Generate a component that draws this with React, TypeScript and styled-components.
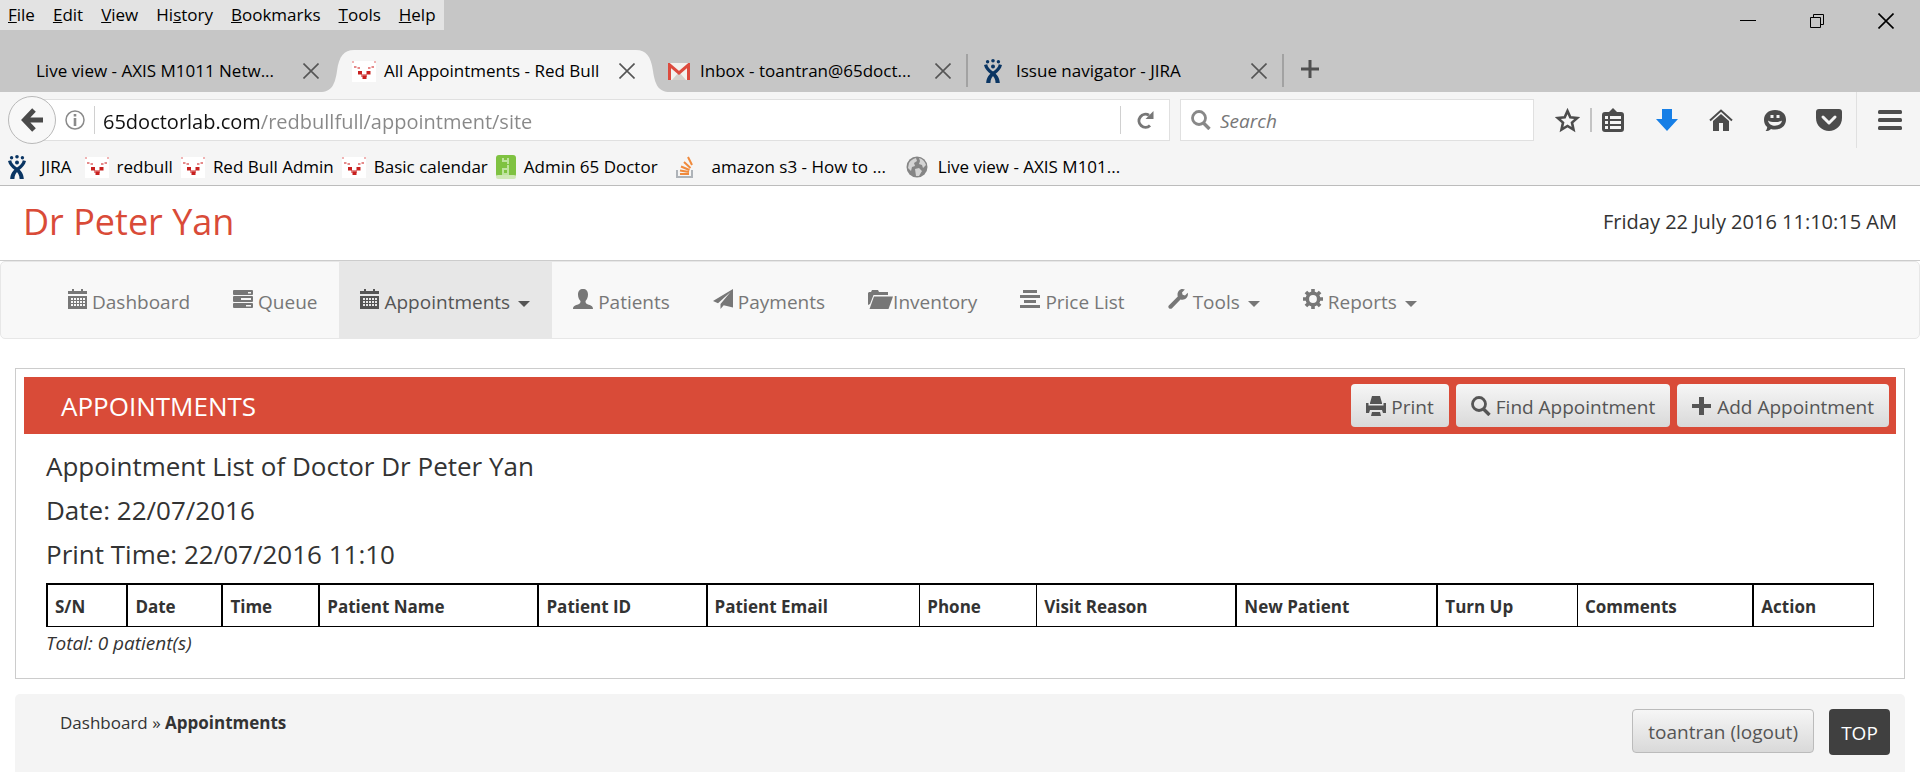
import React from "react";
import styled, { createGlobalStyle, css } from "styled-components";

const GlobalStyle = createGlobalStyle`
  *, *::before, *::after { box-sizing: border-box; }
  html, body, #root { height: 100%; }
  body { margin: 0; background: #fff; color: #333; font: 17px/24px "Open Sans", "Noto Sans", sans-serif; }
  button, input { font: inherit; color: inherit; margin: 0; padding: 0; border: 0; background: none; outline: 0; }
  button { cursor: pointer; white-space: nowrap; }
  a { color: inherit; text-decoration: none; }
  svg { display: block; flex: none; }
  h1, h2, h3, p { margin: 0; font-weight: 400; }
`;

const Page = styled.div`
  min-height: 100%;
  display: flex;
  flex-direction: column;
`;

/* ---------- browser window ---------- */

const TitleBar = styled.div`
  height: 50px;
  display: flex;
  justify-content: space-between;
  align-items: flex-start;
  background: #c6c6c6;
  color: #000;
`;

const MenuBar = styled.div`
  height: 30px;
  display: flex;
  align-items: center;
  gap: 18px;
  padding: 0 8px;
  background: #e3e3e3;
`;

const MenuItem = styled.button`
  font-size: 17px;
  line-height: 24px;
`;

const WindowControls = styled.div`
  height: 42px;
  display: flex;
  align-items: center;
  gap: 53px;
  padding-right: 26px;
`;

const TabStrip = styled.div`
  height: 42px;
  display: flex;
  padding-left: 21px;
  background: #c6c6c6;
  color: #000;
`;

const TabItem = styled.div<{ $active?: boolean; $divider?: boolean }>`
  position: relative;
  z-index: ${(p) => (p.$active ? 1 : 0)};
  width: 316px;
  display: flex;
  align-items: center;
  gap: 8px;
  padding: 0 18px 0 15px;
  background: ${(p) => (p.$active ? "#f5f5f5" : "transparent")};
  ${(p) =>
    p.$divider &&
    css`
      &::after {
        content: "";
        position: absolute;
        right: 1px;
        top: 4px;
        width: 2px;
        height: 33px;
        background: #a2a2a2;
      }
    `}
`;

const TabCurve = styled.svg<{ $side: "left" | "right" }>`
  position: absolute;
  top: 0;
  ${(p) => p.$side}: -17px;
`;

const TabTitle = styled.span`
  position: relative;
  flex: 1;
  white-space: nowrap;
  font-size: 17px;
`;

const Favicon = styled.span`
  position: relative;
  width: 24px;
  display: flex;
`;

const TabClose = styled.button`
  position: relative;
`;

const NewTab = styled.button`
  padding: 0 16px 4px;
`;

const NavBar = styled.div`
  height: 56px;
  display: flex;
  align-items: center;
  padding-left: 8px;
  background: #f5f5f5;
  color: #4c4c4c;
`;

const BackButton = styled.button`
  position: relative;
  z-index: 1;
  width: 48px;
  height: 48px;
  margin-right: -16px;
  display: grid;
  place-items: center;
  border: 1px solid #b9b9b9;
  border-radius: 50%;
  background: #f8f8f8;
`;

const Field = styled.div<{ $width?: number }>`
  height: 42px;
  display: flex;
  align-items: center;
  border: 1px solid #e0e0e0;
  background: #fff;
  ${(p) => (p.$width ? `width: ${p.$width}px;` : "flex: 1;")}
`;

const AddressField = styled(Field)`
  padding-left: 24px;
`;

const SearchField = styled(Field)`
  margin-left: 10px;
  padding-left: 10px;
  gap: 9px;
  color: #888;
`;

const FieldDivider = styled.span`
  width: 1px;
  height: 28px;
  margin: 0 8px 0 9px;
  background: #d0d0d0;
`;

const AddressInput = styled.input`
  flex: 1;
  min-width: 0;
  height: 30px;
  padding-top: 2px;
  font-size: 20px;
  line-height: 28px;
  color: transparent;
  caret-color: #111;
  background: linear-gradient(to right, #111 156px, #888 156px);
  background-clip: text;
`;

const ReloadButton = styled.button`
  width: 49px;
  height: 28px;
  display: grid;
  place-items: center;
  border-left: 1px solid #d0d0d0;
  color: #777;
`;

const SearchInput = styled.input`
  flex: 1;
  min-width: 0;
  height: 30px;
  padding-top: 2px;
  font-size: 19px;
  line-height: 28px;
  &::placeholder { color: #777; font-style: italic; opacity: 1; }
`;

const ToolButtons = styled.div`
  align-self: stretch;
  width: 386px;
  display: flex;
  align-items: center;
  padding-left: 10px;
`;

const ToolButton = styled.button<{ $width?: number }>`
  flex: none;
  width: ${(p) => p.$width ?? 54}px;
  height: 26px;
  display: grid;
  place-items: center;
`;

const ToolGroup = styled.div`
  display: flex;
  margin-left: 6px;
`;

const MenuButton = styled.button`
  flex: 1;
  height: 56px;
  display: grid;
  place-items: center;
  padding-left: 2px;
  border-left: 1px solid #e0e0e0;
`;

const ToolDivider = styled.span`
  width: 2px;
  height: 24px;
  background: #c4c4c4;
`;

const BookmarksBar = styled.div`
  height: 38px;
  display: flex;
  align-items: center;
  padding: 1px 8px 0;
  background: #f5f5f5;
  border-bottom: 1px solid #bcbcbc;
  color: #000;
`;

const Bookmark = styled.a<{ $gap: number; $after: number }>`
  display: flex;
  align-items: center;
  gap: ${(p) => p.$gap}px;
  margin-right: ${(p) => p.$after}px;
  white-space: nowrap;
  font-size: 17px;
`;

/* ---------- clinic site ---------- */

const SiteHeader = styled.header`
  height: 75px;
  display: flex;
  justify-content: space-between;
  padding: 0 23px;
  border-bottom: 1px solid #ccc;
`;

const DoctorName = styled.h1`
  font-size: 36px;
  line-height: 72px;
  color: #d94b38;
`;

const Clock = styled.time`
  font-size: 20px;
  line-height: 72px;
`;

const SiteNav = styled.nav`
  height: 78px;
  display: flex;
  padding-left: 46px;
  border: 1px solid #e7e7e7;
  border-radius: 5px;
  background: #f8f8f8;
`;

const NavLink = styled.a<{ $active?: boolean; $tight?: boolean }>`
  display: flex;
  align-items: center;
  gap: ${(p) => (p.$tight ? 0 : 5)}px;
  padding: 3px 22px 0 21px;
  white-space: nowrap;
  font-size: 19px;
  line-height: 28px;
  color: ${(p) => (p.$active ? "#555" : "#777")};
  background: ${(p) => (p.$active ? "#e7e7e7" : "transparent")};
  & > svg { margin-bottom: 5px; }
`;

const Caret = styled.span`
  margin: 4px 0 0 3px;
  border: 6px solid transparent;
  border-top-color: currentColor;
  border-bottom: 0;
`;

const Panel = styled.main`
  margin: 29px 15px 0;
  padding: 8px;
  min-height: 311px;
  border: 1px solid #ccc;
`;

const PanelBar = styled.div`
  height: 57px;
  display: flex;
  align-items: center;
  gap: 7px;
  padding: 0 7px 0 37px;
  background: #d94b38;
`;

const PanelTitle = styled.h2`
  flex: 1;
  padding-top: 1px;
  font-size: 26px;
  line-height: 36px;
  color: #fff;
`;

const ActionButton = styled.button<{ $outlined?: boolean }>`
  height: ${(p) => (p.$outlined ? 44 : 43)}px;
  display: flex;
  align-items: center;
  gap: 5px;
  padding: 2px 15px 0;
  border: ${(p) => (p.$outlined ? "1px solid #bbb" : "0")};
  border-radius: 4px;
  background: linear-gradient(#f6f6f6, #d9d9d9);
  font-size: 19px;
  line-height: 28px;
  color: #555;
  & > svg { margin-bottom: 2px; }
`;

const Report = styled.section`
  padding: 14px 22px 0;
`;

const ReportLine = styled.h3<{ $last?: boolean }>`
  font-size: 26px;
  line-height: 36px;
  margin-bottom: ${(p) => (p.$last ? 0 : 8)}px;
`;

const AppointmentTable = styled.table`
  width: 100%;
  table-layout: fixed;
  border-spacing: 0;
  margin-top: 11px;
  border: solid #000;
  border-width: 2px 1px 1px 0;
`;

const HeadCell = styled.th<{ $share: number; $thin?: boolean }>`
  width: ${(p) => p.$share}%;
  height: 41px;
  padding: 3px 6px 0 7px;
  border-left: ${(p) => (p.$thin ? 1 : 2)}px solid #000;
  text-align: left;
  white-space: nowrap;
  font-size: 17px;
  line-height: 24px;
`;

const Total = styled.p`
  font-size: 19px;
  line-height: 32px;
  font-style: italic;
`;

const Footer = styled.footer`
  flex: 1;
  min-height: 78px;
  margin: 15px 15px 0;
  padding: 15px 15px 0 45px;
  display: flex;
  align-items: flex-start;
  border-radius: 5px 5px 0 0;
  background: #f4f4f4;
`;

const Breadcrumb = styled.nav`
  flex: 1;
  font-size: 17px;
  line-height: 28px;
`;

const TopButton = styled.a`
  width: 61px;
  height: 46px;
  margin-left: 15px;
  border-radius: 4px;
  background: #404040;
  color: #fff;
  font-size: 19px;
  line-height: 48px;
  text-align: center;
`;

/* ---------- icons ---------- */

const CloseIcon = ({ color = "#555", size = 16 }: { color?: string; size?: number }) => (
  <svg width={size} height={size} viewBox="0 0 16 16" stroke={color} strokeWidth="1.6">
    <path d="M.5.5l15 15M15.5.5l-15 15" />
  </svg>
);

const BullIcon = () => (
  <svg width="24" height="22" viewBox="0 0 24 22">
    <path fill="#fff" d="M0 1h24v21H0z" />
    <path fill="#f0b4b4" d="M0 1h2v2H0zM22 1h2v2h-2z" />
    <path fill="#e58a8a" d="M2 6h2.500v2H2zM5.500 7H8v2H5.500zM16 7h2.500v2H16zM19.500 6H22v2h-2.500zM9 14h6v3H9z" />
    <path fill="#c8201f" d="M6 11h4v3.500H6zM14.500 11h4v3.500h-4zM10.500 15.500h4V19h-4z" />
  </svg>
);

const JiraIcon = () => (
  <svg width="18" height="24" viewBox="0 0 18 24" fill="#0a3563">
    <circle cx="3.600" cy="2.800" r="1.700" />
    <circle cx="9" cy="1.800" r="1.800" />
    <circle cx="14.400" cy="2.800" r="1.700" />
    <circle cx="9" cy="7.600" r="2" />
    <path d="M0 6l3.200-.8c.6 3.300 2.800 5 5.800 7.300 4 3 6.500 6 6.800 11.500h-4.200C11.500 20 10 17.800 7 15.300 3.500 12.500.8 10 0 6z" />
    <path d="M18 6l-3.200-.8c-.6 3.300-2.800 5-5.800 7.300-4 3-6.500 6-6.800 11.500h4.200c.1-4 1.600-6.200 4.600-8.700C14.500 12.500 17.200 10 18 6z" />
  </svg>
);

const GmailIcon = () => (
  <svg width="22" height="17" viewBox="0 0 22 17">
    <path fill="#f3f1ee" d="M2 0h18v17H2z" />
    <path fill="#d5d0cb" d="M4 17l7-8 7 8z" />
    <path fill="none" stroke="#dd4b3e" strokeWidth="3" d="M1.500 17V1.800L11 10l9.500-8.200V17" />
  </svg>
);

const GreenIcon = () => (
  <svg width="20" height="24" viewBox="0 0 20 24">
    <rect width="20" height="22" rx="3" fill="#7fc241" />
    <rect y="20" width="20" height="4" rx="2" fill="#cfe8b5" />
    <path fill="none" stroke="#bfe39f" strokeWidth="2" d="M7 3v3h5V3M12 6v3M12 10v9H7v-5h5" />
  </svg>
);

const StackIcon = () => (
  <svg width="18" height="22" viewBox="0 0 18 22" fill="none">
    <path stroke="#aeb3b8" strokeWidth="2" d="M1 14v7h15v-7" />
    <path stroke="#f08a3c" strokeWidth="2" d="M4 18h9M4 14.500l9 1.500M5 10.500l8.500 3.500M8 6l6.500 6M12 1l4 8" />
  </svg>
);

const GlobeIcon = () => (
  <svg width="22" height="22" viewBox="0 0 22 22">
    <circle cx="11" cy="11" r="10.500" fill="#858585" />
    <path fill="#d4d4d4" d="M3 7c2-3 4-4 7-5l1 3-3 2 1 3-3 1-1 4-3-3zM13 2c4 1 6 4 7 7l-3 3-1-3-3-1 1-3zM9 13l4-1 3 3-3 5h-3z" />
  </svg>
);

const BackIcon = () => (
  <svg width="22" height="24" viewBox="0 0 22 24" fill="none" stroke="#4a4a4a" strokeWidth="5">
    <path d="M13 2L3.500 12 13 22M4 12h18" />
  </svg>
);

const InfoIcon = () => (
  <svg width="20" height="20" viewBox="0 0 20 20">
    <circle cx="10" cy="10" r="9" fill="none" stroke="#8a8a8a" strokeWidth="1.500" />
    <path fill="#8a8a8a" d="M8.700 4h2.600v2.500H8.700zM8.700 8h2.600v8H8.700z" />
  </svg>
);

const ReloadIcon = () => (
  <svg width="17" height="18" viewBox="0 0 17 18">
    <path fill="none" stroke="currentColor" strokeWidth="3" d="M13 14.500A6.500 6.500 0 1 1 12 4.300" />
    <path fill="currentColor" d="M16.500 0v8h-8z" />
  </svg>
);

const MagnifierIcon = () => (
  <svg width="20" height="20" viewBox="0 0 20 20" fill="none" stroke="currentColor">
    <circle cx="8" cy="8" r="6.500" strokeWidth="2.800" />
    <path strokeWidth="3.400" d="M12.500 13l6 6" />
  </svg>
);

const StarIcon = () => (
  <svg width="25" height="25" viewBox="0 0 25 25" fill="none" stroke="#4c4c4c" strokeWidth="2.600">
    <path d="M12.500 3l2.800 6.300 6.900.7-5.200 4.600 1.500 7-6-3.600-6 3.600 1.500-7L2.800 10l6.900-.7z" />
  </svg>
);

const ClipboardIcon = () => (
  <svg width="22" height="24" viewBox="0 0 22 24">
    <path fill="#4c4c4c" d="M3 4h4l4-4 4 4h4a3 3 0 0 1 3 3v14a3 3 0 0 1-3 3H3a3 3 0 0 1-3-3V7a3 3 0 0 1 3-3z" />
    <path fill="#f5f5f5" d="M3 8h3v3H3zM8 8h11v3H8zM3 13h3v3H3zM8 13h11v3H8zM3 18h3v3H3zM8 18h11v3H8z" />
  </svg>
);

const DownloadIcon = () => (
  <svg width="22" height="22" viewBox="0 0 22 22" fill="#177fe6">
    <path d="M6 0h10v10h6L11 22 0 10h6z" />
  </svg>
);

const HomeIcon = () => (
  <svg width="24" height="22" viewBox="0 0 24 22">
    <path fill="none" stroke="#4c4c4c" strokeWidth="2" d="M1 11.500L12 1.500l11 10" />
    <path fill="#4c4c4c" d="M4 12l8-7 8 7v10h-6v-8h-4v8H4z" />
  </svg>
);

const SmileIcon = () => (
  <svg width="22" height="21" viewBox="0 0 22 21">
    <path fill="#4c4c4c" d="M11 0c6.500 0 11 4 11 9.700S17.500 19.500 11 19.500c-1.500 0-2.800-.2-4-.6C5.500 20.500 3.500 21 1.500 21c1-1 1.700-2.500 1.700-4C1.200 15.300 0 12.800 0 9.700 0 4 4.500 0 11 0z" />
    <path fill="#f5f5f5" d="M6.500 5h3v3h-3zM12.500 5h3v3h-3zM4 10.500c2.500 2 11.500 2 14 0-1 7-13 7-14 0z" />
  </svg>
);

const PocketIcon = () => (
  <svg width="26" height="22" viewBox="0 0 26 22">
    <path fill="#4c4c4c" d="M3 0h20a3 3 0 0 1 3 3v6c0 7.500-6 13-13 13S0 16.500 0 9V3a3 3 0 0 1 3-3z" />
    <path fill="none" stroke="#f5f5f5" strokeWidth="3" strokeLinecap="round" strokeLinejoin="round" d="M7 8l6 6 6-6" />
  </svg>
);

const BurgerIcon = () => (
  <svg width="24" height="20" viewBox="0 0 24 20" fill="#4c4c4c">
    <rect width="24" height="4" rx="1.500" />
    <rect y="8" width="24" height="4" rx="1.500" />
    <rect y="16" width="24" height="4" rx="1.500" />
  </svg>
);

const CalendarIcon = () => (
  <svg width="19" height="20" viewBox="0 0 19 20" fill="currentColor">
    <path d="M0 2h4V0h2v2h7V0h2v2h4v3H0z" />
    <path
      fillRule="evenodd"
      d="M0 7h19v13H0zM3 9v2h2V9zM6 9v2h2V9zM9 9v2h2V9zM12 9v2h2V9zM15 9v2h2V9zM3 12v2h2v-2zM6 12v2h2v-2zM9 12v2h2v-2zM12 12v2h2v-2zM15 12v2h2v-2zM3 15v2h2v-2zM6 15v2h2v-2zM9 15v2h2v-2zM12 15v2h2v-2zM15 15v2h2v-2z"
    />
  </svg>
);

const TasksIcon = () => (
  <svg width="20" height="18" viewBox="0 0 20 18">
    <rect width="20" height="5" rx="1" fill="currentColor" />
    <rect y="6" width="20" height="6" rx="1" fill="currentColor" />
    <rect y="13" width="20" height="5" rx="1" fill="currentColor" />
    <path fill="#f8f8f8" d="M15 2h3v1.500h-3zM8 8h10v2H8zM13 15h5v1.500h-5z" />
  </svg>
);

const UserIcon = () => (
  <svg width="20" height="20" viewBox="0 0 20 20" fill="currentColor">
    <path d="M10 0c3.200 0 5 2 5 5.500 0 2.800-1 5-2.500 6.500 0 2 .5 2.600 2 3.200 3.500 1.200 5.500 1.800 5.500 4.800H0c0-3 2-3.600 5.500-4.800 1.500-.6 2-1.200 2-3.200C6 10.500 5 8.300 5 5.500 5 2 6.800 0 10 0z" />
  </svg>
);

const SendIcon = () => (
  <svg width="20" height="20" viewBox="0 0 20 20" fill="currentColor">
    <path d="M20 0L0 12l5 2.200L17.500 3 7.500 15v5l3.200-3.800L20 18.500z" />
  </svg>
);

const FolderIcon = () => (
  <svg width="25" height="19" viewBox="0 0 25 19" fill="currentColor">
    <path d="M0 15V3l1-1h2l1-2h6l1 2h9v3H5.500L2 14z" />
    <path d="M6 6.500h19L20.500 19H1.500z" />
  </svg>
);

const LinesIcon = () => (
  <svg width="20" height="18" viewBox="0 0 20 18" fill="currentColor">
    <path d="M3 0h14v3H3zM0 5h20v3H0zM4 10h12v3H4zM0 15h20v3H0z" />
  </svg>
);

const WrenchIcon = () => (
  <svg width="20" height="20" viewBox="0 0 20 20" fill="currentColor">
    <path d="M14.500 0c.9 0 1.700.2 2.400.5L14 3.400l.6 2.400 2.400.6 2.700-2.700c1 3.500-1.500 7-5.200 7-.7 0-1.400-.1-2-.3l-8.700 9c-1.900 1.500-4.600-1-3-3l9-8.800C8.700 3.800 11 0 14.500 0z" />
  </svg>
);

const CogIcon = () => (
  <svg width="20" height="20" viewBox="0 0 20 20">
    <circle cx="10" cy="10" r="5.700" fill="none" stroke="currentColor" strokeWidth="3.600" />
    <path
      stroke="currentColor"
      strokeWidth="3.600"
      d="M10 0v4M10 16v4M0 10h4M16 10h4M2.900 2.900l2.900 2.900M14.200 14.200l2.900 2.900M2.900 17.100l2.900-2.900M14.200 5.800l2.900-2.900"
    />
  </svg>
);

const PrinterIcon = () => (
  <svg width="20" height="20" viewBox="0 0 20 20" fill="currentColor">
    <path d="M6 0h8l2 7v1H4V7zM0 7h2.500v2.500h15V7H20v10h-3l-1-3H4l-1 3H0zM6 16h8l1 4H5z" />
  </svg>
);

const PlusIcon = () => (
  <svg width="20" height="18" viewBox="0 0 20 18" fill="currentColor">
    <path d="M7 0h5v7h7v4h-7v7H7v-7H0V7h7z" />
  </svg>
);

/* ---------- data ---------- */

const menus: [string, string, string][] = [
  ["", "F", "ile"],
  ["", "E", "dit"],
  ["", "V", "iew"],
  ["Hi", "s", "tory"],
  ["", "B", "ookmarks"],
  ["", "T", "ools"],
  ["", "H", "elp"],
];

const tabs = [
  { title: "Live view - AXIS M1011 Netw..." },
  { title: "All Appointments - Red Bull", icon: <BullIcon />, active: true },
  { title: "Inbox - toantran@65doct...", icon: <GmailIcon />, divider: true },
  { title: "Issue navigator - JIRA", icon: <JiraIcon />, divider: true },
];

const bookmarks = [
  { title: "JIRA", icon: <JiraIcon />, gap: 15, after: 13 },
  { title: "redbull", icon: <BullIcon />, gap: 8, after: 8 },
  { title: "Red Bull Admin", icon: <BullIcon />, gap: 8, after: 8 },
  { title: "Basic calendar", icon: <BullIcon />, gap: 8, after: 8 },
  { title: "Admin 65 Doctor", icon: <GreenIcon />, gap: 8, after: 18 },
  { title: "amazon s3 - How to ...", icon: <StackIcon />, gap: 18, after: 20 },
  { title: "Live view - AXIS M101...", icon: <GlobeIcon />, gap: 10, after: 0 },
];

const sections = [
  { title: "Dashboard", icon: <CalendarIcon /> },
  { title: "Queue", icon: <TasksIcon /> },
  { title: "Appointments", icon: <CalendarIcon />, active: true, menu: true },
  { title: "Patients", icon: <UserIcon /> },
  { title: "Payments", icon: <SendIcon /> },
  { title: "Inventory", icon: <FolderIcon />, tight: true },
  { title: "Price List", icon: <LinesIcon /> },
  { title: "Tools", icon: <WrenchIcon />, menu: true },
  { title: "Reports", icon: <CogIcon />, menu: true },
];

const columns = [
  { title: "S/N", share: 4.4 },
  { title: "Date", share: 5.2 },
  { title: "Time", share: 5.3 },
  { title: "Patient Name", share: 12 },
  { title: "Patient ID", share: 9.2 },
  { title: "Patient Email", share: 11.7 },
  { title: "Phone", share: 6.4, thin: true },
  { title: "Visit Reason", share: 10.9, thin: true },
  { title: "New Patient", share: 11 },
  { title: "Turn Up", share: 7.7 },
  { title: "Comments", share: 9.6, thin: true },
  { title: "Action", share: 6.6 },
];

const BrowserWindow = () => (
  <header>
    <TitleBar>
      <MenuBar>
        {menus.map(([before, key, after]) => (
          <MenuItem key={key + after}>
            {before}
            <u>{key}</u>
            {after}
          </MenuItem>
        ))}
      </MenuBar>
      <WindowControls>
        <button aria-label="Minimise">
          <svg width="16" height="16" viewBox="0 0 16 16" stroke="#000"><path d="M0 7.500h16" /></svg>
        </button>
        <button aria-label="Restore">
          <svg width="16" height="16" viewBox="0 0 16 16" fill="none" stroke="#000">
            <path d="M1.500 4.500h10v10h-10zM4.500 4V1.500h10v10H12" />
          </svg>
        </button>
        <button aria-label="Close window"><CloseIcon color="#000" /></button>
      </WindowControls>
    </TitleBar>
    <TabStrip>
      {tabs.map((t) => (
        <TabItem key={t.title} $active={t.active} $divider={t.divider}>
          {t.active && (
            <>
              <TabCurve $side="left" width="34" height="42" viewBox="0 0 34 42" fill="#f5f5f5">
                <path fill="#c6c6c6" d="M17 0h17v42H17z" />
                <path d="M0 42C12 42 15 34 17 21 19 6 24 0 34 0v42z" />
              </TabCurve>
              <TabCurve $side="right" width="34" height="42" viewBox="0 0 34 42" fill="#f5f5f5">
                <path fill="#c6c6c6" d="M0 0h17v42H0z" />
                <path d="M34 42C22 42 19 34 17 21 15 6 10 0 0 0v42z" />
              </TabCurve>
            </>
          )}
          {t.icon && <Favicon>{t.icon}</Favicon>}
          <TabTitle>{t.title}</TabTitle>
          <TabClose aria-label="Close tab"><CloseIcon /></TabClose>
        </TabItem>
      ))}
      <NewTab aria-label="New tab">
        <svg width="18" height="18" viewBox="0 0 18 18" stroke="#505050" strokeWidth="3"><path d="M9 0v18M0 9h18" /></svg>
      </NewTab>
    </TabStrip>
    <NavBar>
      <BackButton aria-label="Back"><BackIcon /></BackButton>
      <AddressField>
        <InfoIcon />
        <FieldDivider />
        <AddressInput aria-label="Address" defaultValue="65doctorlab.com/redbullfull/appointment/site" />
        <ReloadButton aria-label="Reload"><ReloadIcon /></ReloadButton>
      </AddressField>
      <SearchField $width={354}>
        <MagnifierIcon />
        <SearchInput aria-label="Search" placeholder="Search" />
      </SearchField>
      <ToolButtons>
        <ToolButton $width={46} aria-label="Bookmark this page"><StarIcon /></ToolButton>
        <ToolDivider />
        <ToolButton $width={42} aria-label="Bookmarks"><ClipboardIcon /></ToolButton>
        <ToolGroup>
          <ToolButton aria-label="Downloads"><DownloadIcon /></ToolButton>
          <ToolButton aria-label="Home"><HomeIcon /></ToolButton>
          <ToolButton aria-label="Chat"><SmileIcon /></ToolButton>
          <ToolButton aria-label="Pocket"><PocketIcon /></ToolButton>
        </ToolGroup>
        <MenuButton aria-label="Open menu"><BurgerIcon /></MenuButton>
      </ToolButtons>
    </NavBar>
    <BookmarksBar>
      {bookmarks.map((b) => (
        <Bookmark key={b.title} href="#" $gap={b.gap} $after={b.after}>
          {b.icon}
          {b.title}
        </Bookmark>
      ))}
    </BookmarksBar>
  </header>
);

export default function App() {
  return (
    <Page>
      <GlobalStyle />
      <BrowserWindow />
      <SiteHeader>
        <DoctorName>Dr Peter Yan</DoctorName>
        <Clock>Friday 22 July 2016 11:10:15 AM</Clock>
      </SiteHeader>
      <SiteNav>
        {sections.map((s) => (
          <NavLink key={s.title} href="#" $active={s.active} $tight={s.tight}>
            {s.icon}
            {s.title}
            {s.menu && <Caret />}
          </NavLink>
        ))}
      </SiteNav>
      <Panel>
        <PanelBar>
          <PanelTitle>APPOINTMENTS</PanelTitle>
          <ActionButton><PrinterIcon />Print</ActionButton>
          <ActionButton><MagnifierIcon />Find Appointment</ActionButton>
          <ActionButton><PlusIcon />Add Appointment</ActionButton>
        </PanelBar>
        <Report>
          <ReportLine>Appointment List of Doctor Dr Peter Yan</ReportLine>
          <ReportLine>Date: 22/07/2016</ReportLine>
          <ReportLine $last>Print Time: 22/07/2016 11:10</ReportLine>
          <AppointmentTable>
            <thead>
              <tr>
                {columns.map((c) => (
                  <HeadCell key={c.title} scope="col" $share={c.share} $thin={c.thin}>
                    {c.title}
                  </HeadCell>
                ))}
              </tr>
            </thead>
          </AppointmentTable>
          <Total>Total: 0 patient(s)</Total>
        </Report>
      </Panel>
      <Footer>
        <Breadcrumb aria-label="Breadcrumb">
          <a href="#">Dashboard</a> » <strong>Appointments</strong>
        </Breadcrumb>
        <ActionButton $outlined>toantran (logout)</ActionButton>
        <TopButton href="#">TOP</TopButton>
      </Footer>
    </Page>
  );
}
